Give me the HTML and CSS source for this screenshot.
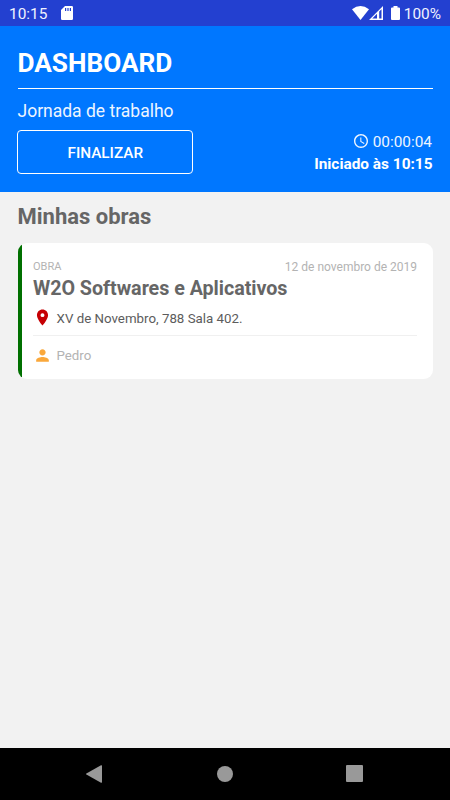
FILE: index.html
```html
<!DOCTYPE html>
<html lang="pt-BR">
<head>
<meta charset="utf-8">
<title>Dashboard</title>
<link rel="stylesheet" href="styles.css">
</head>
<body>
<div class="screen">
  <div class="status">
    <span class="clock">10:15</span>
    <svg class="sd" width="12" height="14" viewBox="0 0 12 14"><path fill="#fff" fill-rule="evenodd" d="M4 0h6.800Q12 0 12 1.200v11.600q0 1.200-1.200 1.200H1.200Q0 14 0 12.800V4zM4 2v3h1.200V2zm2.400 0v3h1.200V2zm2.400 0v3H10V2z"/></svg>
    <span class="spacer"></span>
    <svg class="wifi" width="17" height="14" viewBox="0 0 17 14"><path fill="#fff" d="M8.500 14 0 3.300Q8.500-3.100 17 3.300z"/></svg>
    <svg class="signal" width="14" height="14" viewBox="0 0 14 14"><path fill="#fff" fill-rule="evenodd" d="M14 0v14H0zM8 7.800 3.300 12.600H8zM10.200 5.500v7.100h2.300V3.200z"/></svg>
    <svg class="battery" width="9" height="14" viewBox="0 0 9 14"><path fill="#fff" d="M2.500 0h4v1.500H8q1 0 1 1V13q0 1-1 1H1q-1 0-1-1V2.500q0-1 1-1h1.500z"/></svg>
    <span class="percent">100%</span>
  </div>
  <header class="header">
    <h1>DASHBOARD</h1>
    <p class="subtitle">Jornada de trabalho</p>
    <div class="journey">
      <button class="finish"><span>FINALIZAR</span></button>
      <div class="times">
        <div class="elapsed">
          <svg width="14" height="14" viewBox="2 2 20 20"><path fill="#edf5ff" d="M11.990 2C6.470 2 2 6.480 2 12s4.470 10 9.990 10C17.520 22 22 17.520 22 12S17.520 2 11.990 2zM12 20c-4.420 0-8-3.580-8-8s3.580-8 8-8 8 3.580 8 8-3.580 8-8 8zm.5-13H11v6l5.250 3.150.75-1.230-4.500-2.670z"/></svg>
          <span>00:00:04</span>
        </div>
        <div class="started">Iniciado às 10:15</div>
      </div>
    </div>
  </header>
  <main class="content">
    <h2>Minhas obras</h2>
    <article class="card">
      <div class="top"><span class="label">OBRA</span><span class="date">12 de novembro de 2019</span></div>
      <h3>W2O Softwares e Aplicativos</h3>
      <div class="row address">
        <svg width="19" height="19" viewBox="0 0 24 24"><path fill="#c60004" d="M12 2C8.130 2 5 5.130 5 9c0 5.250 7 13 7 13s7-7.750 7-13c0-3.870-3.130-7-7-7zm0 9.500a2.500 2.500 0 0 1 0-5 2.500 2.500 0 0 1 0 5z"/></svg>
        <span>XV de Novembro, 788 Sala 402.</span>
      </div>
      <div class="row person">
        <svg width="19" height="19" viewBox="0 0 24 24"><path fill="#faa83b" d="M12 12c2.210 0 4-1.790 4-4s-1.790-4-4-4-4 1.790-4 4 1.790 4 4 4zm0 2c-2.670 0-8 1.340-8 4v2h16v-2c0-2.660-5.330-4-8-4z"/></svg>
        <span>Pedro</span>
      </div>
    </article>
  </main>
  <nav class="nav">
    <svg width="16" height="18" viewBox="0 0 16 18"><path fill="#999" d="M15 .3q1-.5 1 .6v16.200q0 1.100-1 .6L.4 9.600Q-.4 9 .4 8.400z"/></svg>
    <svg width="16" height="16" viewBox="0 0 16 16"><circle cx="8" cy="8" r="8" fill="#999"/></svg>
    <svg width="17" height="17" viewBox="0 0 17 17"><rect width="17" height="17" rx="1" fill="#999"/></svg>
  </nav>
</div>
</body>
</html>
```

FILE: styles.css
```css
* { box-sizing: border-box; margin: 0; padding: 0; }
body { font-family: Roboto, sans-serif; background: #f2f2f2; }
svg { display: block; flex: none; }
.screen { width: 450px; height: 800px; display: flex; flex-direction: column; overflow: hidden; }
.status { height: 26px; flex: none; display: flex; align-items: center; padding: 0 9px; background: #2340d0; color: #f0f2ff; font-size: 15.400px; }
.status span { padding-top: 2px; }
.sd { margin-left: 14px; }
.spacer { flex: 1; }
.battery { margin: 0 4px 0 8px; }
.header { height: 165.500px; flex: none; padding: 18px 17.500px 0; background: #0077ff; color: #fff; }
h1 { height: 45px; border-bottom: 1px solid #fff; font-size: 26.200px; line-height: 38px; font-weight: 700; }
.subtitle { margin-top: 11px; font-size: 17.500px; line-height: 22px; color: #edf5ff; }
.journey { display: flex; justify-content: space-between; margin-top: 8px; }
.finish { width: 175.500px; height: 44px; margin-left: -.5px; padding: 2px 0 0 1px; border: 1px solid #fff; border-radius: 4px; background: transparent; color: #fff; font: 500 15.300px Roboto, sans-serif; }
.times { text-align: right; font-size: 15.400px; line-height: 22px; padding-top: 1px; }
.elapsed { display: flex; align-items: center; justify-content: flex-end; gap: 5px; padding-right: .5px; color: #edf5ff; }
.elapsed svg { margin-top: -2px; }
.started { font-weight: 700; }
.content { flex: 1; padding: 9px 17px 0 17.500px; background: #f2f2f2; }
h2 { font-size: 22px; line-height: 32px; font-weight: 700; color: #666; }
.card { height: 136px; margin-top: 10.700px; padding: 15px 16px 0 15.500px; border-radius: 9px; background: linear-gradient(90deg, #007000 4px, #fff 4px); }
.top { display: flex; justify-content: space-between; height: 17px; line-height: 17px; color: #b3b3b3; }
.label { font-size: 11px; }
.date { font-size: 12px; line-height: 19px; }
h3 { font-size: 19.700px; line-height: 28px; height: 25px; font-weight: 700; letter-spacing: -.03px; color: #666; }
.row { display: flex; align-items: center; gap: 5px; font-size: 13.300px; }
.address { height: 36px; border-bottom: 1px solid #f0f0f0; color: #5c5c5c; }
.address span { padding-top: 2px; }
.person { height: 38px; color: #b3b3b3; }
.row svg { margin-left: -.5px; }
.nav { height: 52.500px; flex: none; display: flex; align-items: center; justify-content: space-between; padding: 0 87px 0 86px; background: #000; }
.nav svg:nth-child(2) { margin-left: 1px; }
```
